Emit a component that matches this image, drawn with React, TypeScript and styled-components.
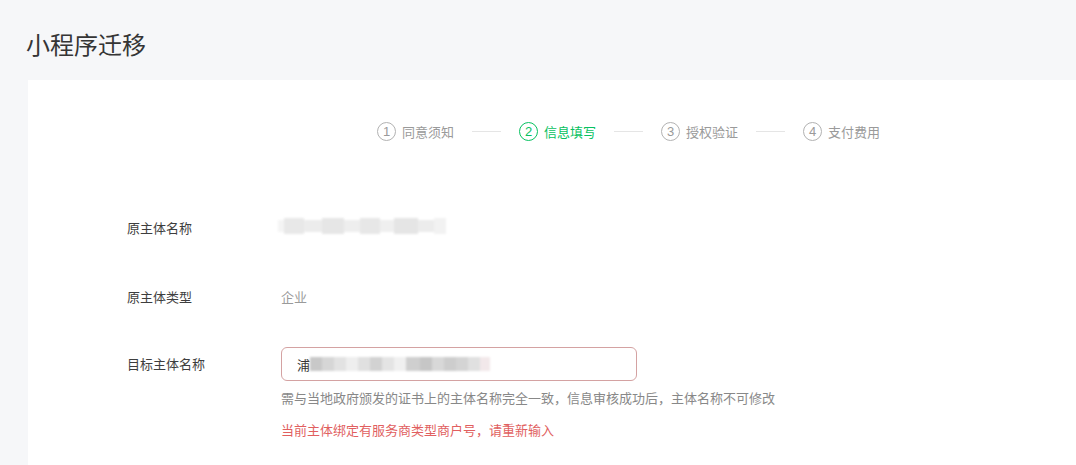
import React from "react";
import styled, { createGlobalStyle } from "styled-components";

const Global = createGlobalStyle`
  html, body { margin: 0; padding: 0; background: #f6f7f9; }
  body { font-family: "Noto Sans CJK SC", "Noto Sans", sans-serif; overflow: hidden; }
`;

const Page = styled.div`
  width: 1076px;
  height: 465px;
  display: flex;
  flex-direction: column;
  background: #f6f7f9;
`;

const Title = styled.h1`
  margin: 0;
  padding: 28px 0 0 26px;
  height: 80px;
  flex-shrink: 0;
  box-sizing: border-box;
  font-size: 24px;
  font-weight: 400;
  line-height: 32px;
  color: #353535;
`;

const Card = styled.div`
  flex: 1;
  margin-left: 28px;
  background: #fff;
  padding-top: 41px;
  display: flex;
  flex-direction: column;
`;

const Steps = styled.div`
  display: flex;
  align-items: center;
  gap: 18px;
  margin-left: 349px;
  height: 20px;
`;

const Step = styled.div<{ $active?: boolean }>`
  display: flex;
  align-items: center;
  gap: 6px;
  font-size: 13px;
  color: ${(p) => (p.$active ? "#07c160" : "#9a9a9a")};
`;

const Circle = styled.span<{ $active?: boolean }>`
  width: 17px;
  height: 17px;
  border-radius: 50%;
  border: 1px solid ${(p) => (p.$active ? "#07c160" : "#b2b2b2")};
  display: flex;
  align-items: center;
  justify-content: center;
  font-family: "Liberation Sans", sans-serif;
  font-size: 13px;
  line-height: 1;
`;

const Line = styled.span`
  width: 29px;
  height: 1px;
  background: #e5e5e5;
`;

const Form = styled.div`
  margin-left: 99px;
  display: flex;
  flex-direction: column;
`;

const Row = styled.div<{ $top: number }>`
  display: flex;
  align-items: flex-start;
  margin-top: ${(p) => p.$top}px;
`;

const Label = styled.div<{ $h?: number }>`
  width: 154px;
  font-size: 13px;
  color: #3e3e3e;
  height: ${(p) => p.$h ?? 20}px;
  line-height: ${(p) => p.$h ?? 20}px;
  flex-shrink: 0;
`;

const Value = styled.div`
  font-size: 13px;
  color: #9a9a9a;
  line-height: 20px;
  height: 20px;
`;

const Field = styled.div`
  display: flex;
  flex-direction: column;
`;

const Input = styled.div`
  width: 356px;
  height: 34px;
  box-sizing: border-box;
  border: 1px solid #d4a2a2;
  border-radius: 6px;
  display: flex;
  align-items: center;
  padding-left: 15px;
  font-size: 13px;
  color: #353535;
`;

const Blur = styled.div`
  display: flex;
  align-items: center;
  filter: blur(1.2px);
`;

const Block = styled.span<{ $w: number; $c: string; $h?: number }>`
  display: inline-block;
  width: ${(p) => p.$w}px;
  height: ${(p) => p.$h ?? 14}px;
  background: ${(p) => p.$c};
`;

const Hint = styled.div`
  margin-top: 7px;
  font-size: 13px;
  line-height: 20px;
  color: #888;
`;

const Error = styled.div`
  margin-top: 12px;
  font-size: 13px;
  line-height: 20px;
  color: #e15f5f;
`;

const steps = ["同意须知", "信息填写", "授权验证", "支付费用"];

export default function App() {
  const blur1: [number, string][] = [
    [6, "#f4f4f4"], [20, "#e8e8e8"], [18, "#ececec"], [22, "#e6e6e6"], [16, "#eeeeee"],
    [20, "#e7e7e7"], [14, "#efefef"], [24, "#e5e5e5"], [16, "#ececec"], [12, "#f2f2f2"],
  ];
  const blur2: [number, string][] = [
    [12, "#c8c8c8"], [12, "#d6d6d6"], [12, "#e2e2e2"], [12, "#eeeeee"], [12, "#e0e0e0"],
    [12, "#d2d2d2"], [12, "#e4e4e4"], [12, "#f0f0f0"], [14, "#cfcfcf"], [12, "#c6c6c6"],
    [12, "#d8d8d8"], [12, "#cdcdcd"], [12, "#d4d4d4"], [12, "#e0e0e0"], [10, "#f2e8ea"],
  ];
  return (
    <>
      <Global />
      <Page>
        <Title>小程序迁移</Title>
        <Card>
          <Steps>
            {steps.map((s, i) => (
              <React.Fragment key={s}>
                {i > 0 && <Line />}
                <Step $active={i === 1}>
                  <Circle $active={i === 1}>{i + 1}</Circle>
                  {s}
                </Step>
              </React.Fragment>
            ))}
          </Steps>
          <Form>
            <Row $top={77}>
              <Label>原主体名称</Label>
              <Blur style={{ marginLeft: -3 }}>
                {blur1.map(([w, c], i) => (
                  <Block key={i} $w={w} $c={c} $h={i % 2 ? 16 : 12} />
                ))}
              </Blur>
            </Row>
            <Row $top={49}>
              <Label>原主体类型</Label>
              <Value>企业</Value>
            </Row>
            <Row $top={40}>
              <Label $h={34}>目标主体名称</Label>
              <Field>
                <Input>
                  <span>浦</span>
                  <Blur>
                    {blur2.map(([w, c], i) => (
                      <Block key={i} $w={w} $c={c} />
                    ))}
                  </Blur>
                </Input>
                <Hint>需与当地政府颁发的证书上的主体名称完全一致，信息审核成功后，主体名称不可修改</Hint>
                <Error>当前主体绑定有服务商类型商户号，请重新输入</Error>
              </Field>
            </Row>
          </Form>
        </Card>
      </Page>
    </>
  );
}
